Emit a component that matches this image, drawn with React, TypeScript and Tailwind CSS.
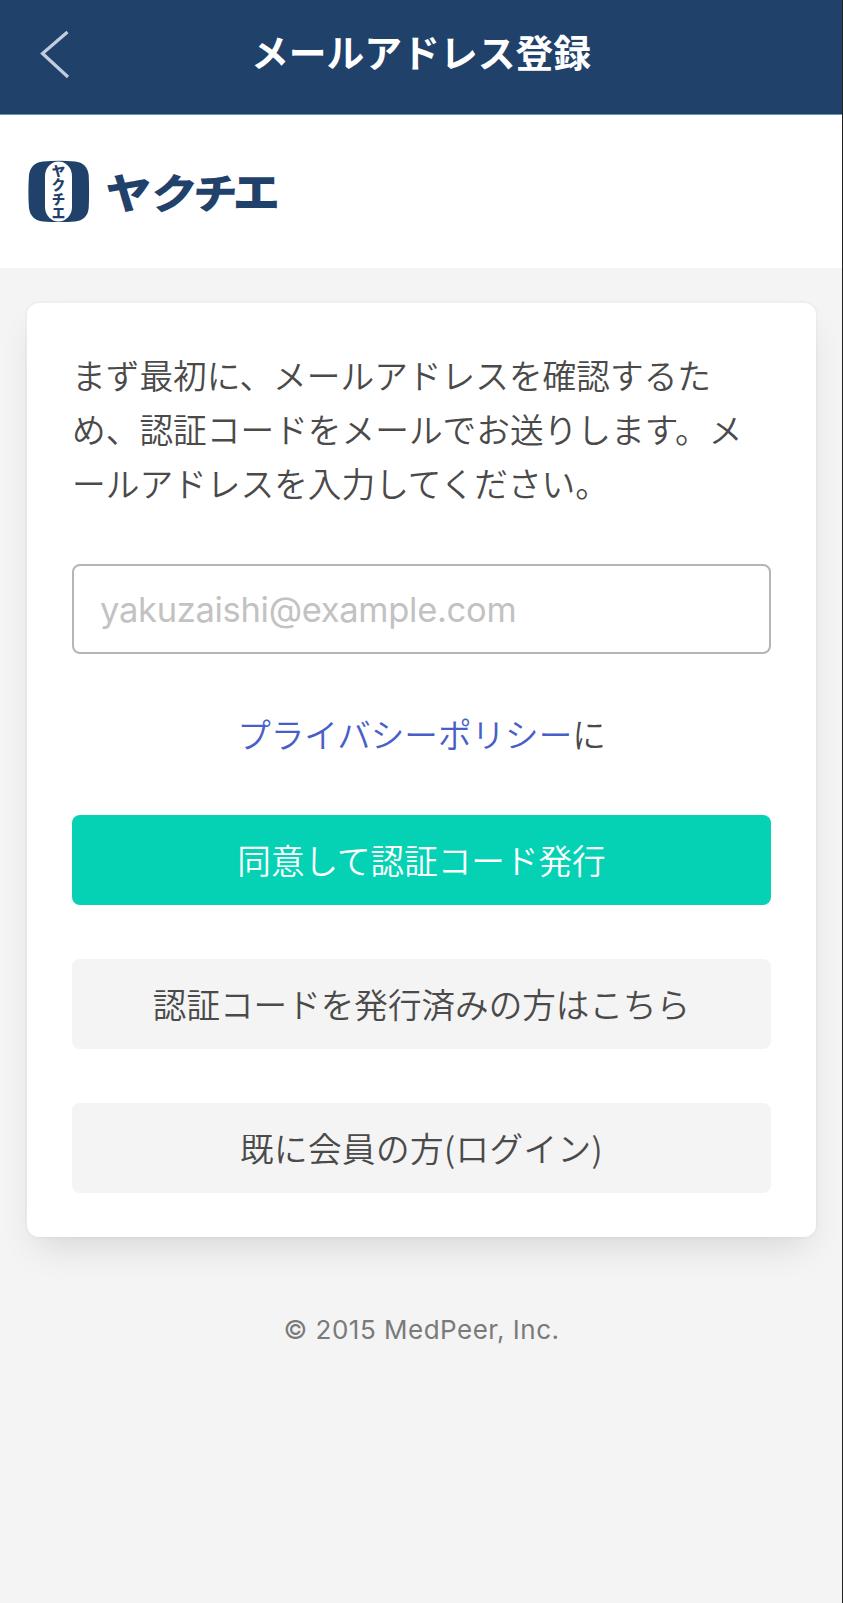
import React, { useState } from 'react';

const messageLines = [
  'まず最初に、メールアドレスを確認するた',
  'め、認証コードをメールでお送りします。メ',
  'ールアドレスを入力してください。',
];

const logoChars = [
  { char: 'ヤ', transform: 'translate(100.5 48.5) scale(1.07 0.97)' },
  { char: 'ク', transform: 'translate(143 48.5) skewX(-10) scale(1.04 0.97)' },
  { char: 'チ', transform: 'translate(186 48.5) skewX(-5) scale(1.03 0.97)' },
  { char: 'エ', transform: 'translate(228.5 48.5) scale(1.1 1.02)' },
];

const BackIcon = () => (
  <svg width="30" height="50" viewBox="0 0 30 50" fill="none" stroke="#c3cde0" strokeWidth="3.2">
    <path d="M27.5 2L2.5 23.5L28 47" />
  </svg>
);

const Logo = () => (
  <svg
    width="256"
    height="64"
    viewBox="0 0 256 64"
    fill="#1f416a"
    role="img"
    aria-label="ヤクチエ"
    className="overflow-visible font-['Noto_Sans_CJK_JP',sans-serif] font-black"
  >
    <path d="M15 1.5C25 0.6 37 0.6 47 1.5C55 2.4 60 7 60.7 15C61.2 26 61.2 38 60.7 48C60 56 55 60.8 47 61.4C37 62.2 25 62.2 15 61.4C7 60.8 2 56 1 48C0.2 38 0.2 26 1 15C2 7 7 2.4 15 1.5Z" />
    <rect x="17" y="1.5" width="27" height="60" rx="13.5" ry="14.5" fill="#fff" />
    {logoChars.map(({ char }, i) => (
      <text key={char} x="30.5" y={16 + i * 14} fontSize="13.5" textAnchor="middle">
        {char}
      </text>
    ))}
    {logoChars.map(({ char, transform }) => (
      <text key={char} transform={transform} fontSize="43" textAnchor="middle">
        {char}
      </text>
    ))}
  </svg>
);

const App = () => {
  const [email, setEmail] = useState('');

  return (
    <div className="min-h-[1603px] w-full border-r border-[#222] bg-[#f4f4f4] font-['Noto_Sans_CJK_JP',sans-serif] text-[#4a4a4a]">
      {/* Navigation bar */}
      <header className="grid h-[115px] grid-cols-[100px_1fr_100px] border-b border-[#6b94ae] bg-[#1f416a] pb-[10px]">
        <button type="button" aria-label="戻る" className="flex items-center pt-[5px] pl-10">
          <BackIcon />
        </button>
        <h1 className="flex items-center justify-center whitespace-nowrap pb-[2px] text-[37.8px] leading-none font-bold text-white">
          メールアドレス登録
        </h1>
      </header>

      <div className="flex h-[153px] items-center bg-white pl-7">
        <Logo />
      </div>

      <main className="pt-[35px] pr-[26px] pl-[27px]">
        {/* Card */}
        <div className="h-[934px] rounded-xl bg-white px-[45px] pt-[45px] shadow-[0_18px_36px_-9px_rgba(10,10,10,0.12),0_0_0_2px_rgba(10,10,10,0.02)]">
          <p className="text-[33.7px] leading-[54px] font-[350] whitespace-nowrap">
            {messageLines.map((line) => (
              <span key={line} className="block">
                {line}
              </span>
            ))}
          </p>

          <input
            type="email"
            value={email}
            onChange={(e) => setEmail(e.target.value)}
            placeholder="yakuzaishi@example.com"
            className="mt-[54px] block h-[90px] w-full rounded-lg border-2 border-[#b5b5b5] bg-white px-[26px] font-['Inter',sans-serif] text-[34.5px] tracking-[-0.3px] placeholder:text-[#c2c2c2]"
          />

          <p className="mt-[53px] text-center text-[33.6px] leading-[54px] font-[350]">
            <a href="#" className="text-[#485fc7]">プライバシーポリシー</a>に
          </p>

          <div className="mt-[54px] flex flex-col gap-[54px] text-[33.6px] font-[350]">
            <button type="button" className="h-[90px] rounded-lg bg-[#05d2b4] text-white">
              同意して認証コード発行
            </button>
            <button type="button" className="h-[90px] rounded-lg bg-[#f4f4f4]">
              認証コードを発行済みの方はこちら
            </button>
            <button type="button" className="h-[90px] rounded-lg bg-[#f4f4f4] tracking-[0.4px]">
              既に会員の方(ログイン)
            </button>
          </div>
        </div>

        <footer className="mt-[73px] text-center font-['Inter',sans-serif] text-[26px] leading-10 tracking-[0.5px] text-[#7a7a7a]">
          © 2015 MedPeer, Inc.
        </footer>
      </main>
    </div>
  );
};

export default App;
